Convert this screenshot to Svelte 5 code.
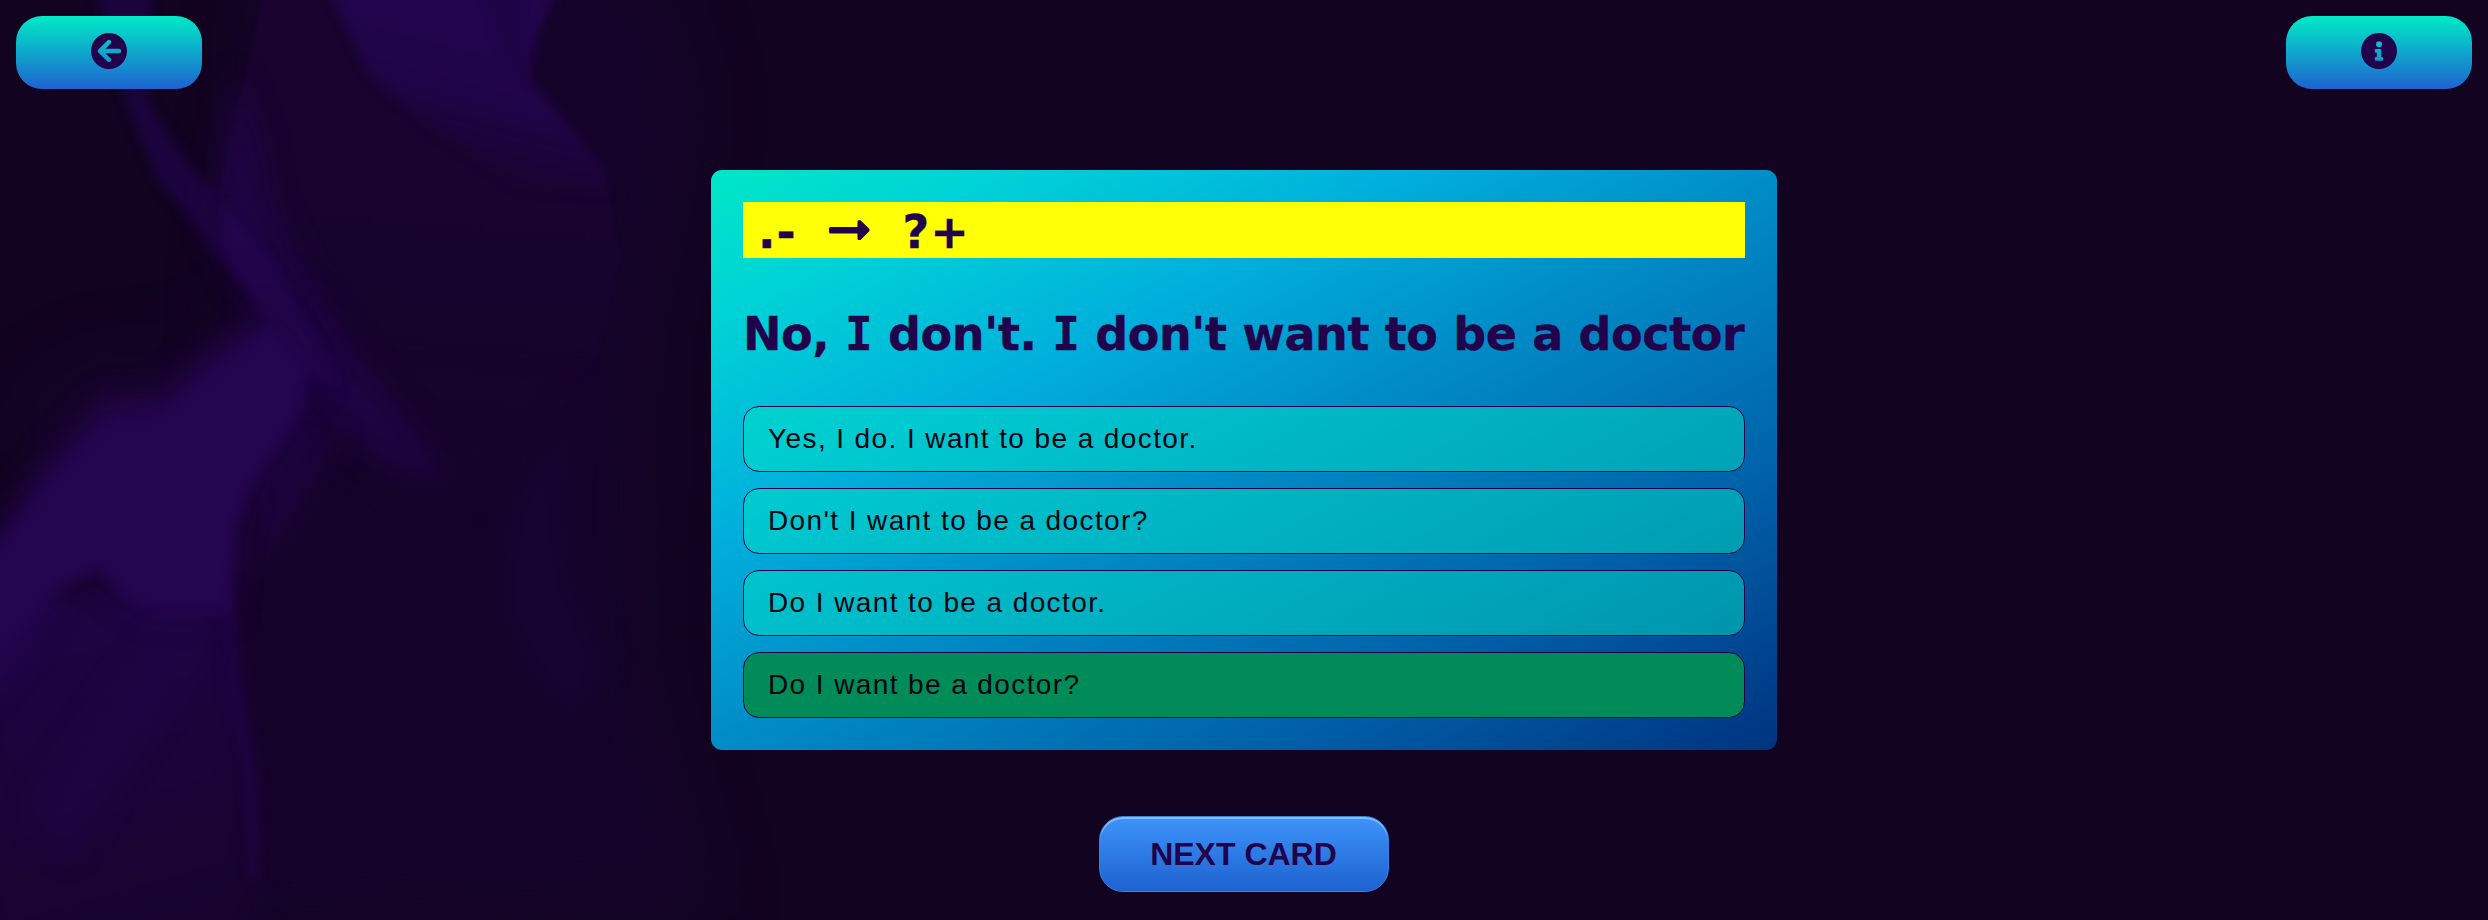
<script>
  const question = ["No,", "I", "don't.", "I", "don't", "want", "to", "be", "a", "doctor"];
  const answers = [
    { text: "Yes, I do. I want to be a doctor.", correct: false },
    { text: "Don't I want to be a doctor?", correct: false },
    { text: "Do I want to be a doctor.", correct: false },
    { text: "Do I want be a doctor?", correct: true }
  ];
</script>

<div class="page">
  <svg class="backdrop" viewBox="0 0 2488 920" aria-hidden="true" color-interpolation-filters="sRGB">
    <defs>
      <filter id="b6" x="-30%" y="-30%" width="160%" height="160%"><feGaussianBlur stdDeviation="10" /></filter>
      <filter id="b3" x="-30%" y="-30%" width="160%" height="160%"><feGaussianBlur stdDeviation="3" /></filter>
      <filter id="b18" x="-80%" y="-80%" width="260%" height="260%"><feGaussianBlur stdDeviation="26" /></filter>
      <filter id="b40" x="-50%" y="-50%" width="200%" height="200%"><feGaussianBlur stdDeviation="60" /></filter>
      <linearGradient id="sheet" gradientUnits="userSpaceOnUse" x1="800" y1="0" x2="740" y2="900">
        <stop offset="0" stop-color="#18042f" /><stop offset=".55" stop-color="#17042e" /><stop offset="1" stop-color="#16042b" stop-opacity="0" />
      </linearGradient>
      <linearGradient id="crest" gradientUnits="userSpaceOnUse" x1="900" y1="60" x2="830" y2="350">
        <stop offset="0" stop-color="#22054c" /><stop offset=".35" stop-color="#200448" /><stop offset="1" stop-color="#180430" stop-opacity="0" />
      </linearGradient>
      <linearGradient id="low" gradientUnits="userSpaceOnUse" x1="200" y1="1050" x2="330" y2="1560">
        <stop offset="0" stop-color="#1e0443" /><stop offset="1" stop-color="#18042f" />
      </linearGradient>
    </defs>
    <g transform="scale(.5293 .5867)">
      <path d="M480-80H1240L1330 180 1240 600 1230 1130 1360 1560 0 1650V1100L420 900Z" fill="#16042b" opacity=".85" filter="url(#b40)" />
      <path d="M500-20H1060L1000 80V135L1145 290 1170 440 1130 600 1000 800 850 950 640 830 500 540 400 380Z" fill="url(#sheet)" filter="url(#b3)" />
      <path d="M610-40H1065Q1005 60 1000 135L1145 290 1150 330 980 320 820 220 700 130Z" fill="url(#crest)" filter="url(#b6)" />
      <path d="M930-20H985Q970 60 1000 135L980 130Q940 80 920-20Z" fill="#1b043e" opacity=".6" filter="url(#b6)" />
      <path d="M180-20H290L270 140Q300 230 410 330L480 500 420 440 300 310 240 180Z" fill="#1b043e" filter="url(#b6)" />
      <path d="M440 130Q500 240 500 330 560 480 700 640L860 830 740 790 600 700 500 550 400 400Z" fill="#1e0444" filter="url(#b18)" />
      <path d="M420 350Q500 420 590 570L640 660 560 630 500 540 430 440Z" fill="#23054c" filter="url(#b6)" />
      <path d="M40 700L180 620 340 620 500 530 580 600 480 640 80 800Z" fill="#170430" opacity=".8" filter="url(#b40)" />
      <path d="M-40 980L100 1000 430 1030 470 1300 490 1500 460 1650-40 1650Z" fill="url(#low)" filter="url(#b18)" />
      <path d="M415 1040H445L460 1200 490 1340 488 1500 470 1500 460 1300 425 1180Z" fill="#1e0444" opacity=".8" filter="url(#b6)" />
      <path d="M500 780L570 700 640 740 560 880 460 1000Z" fill="#1b043c" filter="url(#b18)" />
      <path d="M-60 980L60 820 200 680 300 680 400 600 510 540 575 620 570 700 475 820 442 900 435 1045 300 1045 230 1020 190 965 110 980 70 1070-60 1220Z" fill="#24054f" filter="url(#b18)" />
      <path d="M-20 960L60 860 200 725 300 710 400 640 510 560 575 620 570 700 475 820 442 900 435 1045 300 1045 240 1020 190 970 110 1000 60 1050-20 1120Z" fill="#24054f" filter="url(#b6)" />
      <path d="M1100 650L1060 850 1080 1000 1140 1120 1100 1240 1010 1160 940 1040 960 870Z" fill="#180431" filter="url(#b18)" />
      <path d="M300 1080L400 1080 240 1300 130 1460 50 1380Z" fill="#220549" opacity=".5" filter="url(#b18)" />
    </g>
  </svg>

  <header>
    <button class="tool" aria-label="Back">
      <svg width="36" height="36" viewBox="0 0 36 36">
        <path fill-rule="evenodd" fill="#20034b" d="M18 0a18 18 0 1 0 0 36 18 18 0 0 0 0-36ZM7.3 16.5 16.4 7.6a2.2 2.2 0 0 1 3.2 3.1L14.4 15.8H28a2.2 2.2 0 0 1 0 4.4H14.4l5.2 5.1a2.2 2.2 0 0 1-3.2 3.1L7.3 19.5a2.1 2.1 0 0 1 0-3Z" />
      </svg>
    </button>
    <button class="tool" aria-label="Information">
      <svg width="36" height="36" viewBox="0 0 36 36">
        <path fill-rule="evenodd" fill="#20034b" d="M18 0a18 18 0 1 0 0 36 18 18 0 0 0 0-36ZM18 8.2a3 3 0 1 1 0 6 3 3 0 0 1 0-6ZM14.8 16h4.6a1 1 0 0 1 1 1v7h.8a1 1 0 0 1 1 1v1.8a1 1 0 0 1-1 1h-6.4a1 1 0 0 1-1-1V25a1 1 0 0 1 1-1h1v-4.300h-1a1 1 0 0 1-1-1V17a1 1 0 0 1 1-1Z" />
      </svg>
    </button>
  </header>

  <main>
    <section class="card">
      <div class="hint"><span>.-</span><svg width="41" height="21" viewBox="0 0 41 21"><path fill="#20034b" d="M1.5 7H28.500V1.500Q28.500 0 30 .2H31.500L40 8.500Q41.300 10 40 11.500L31.500 20H30Q28.500 20.200 28.500 18.500V13.500H1.500Q0 13.500 0 12V8.500Q0 7 1.500 7Z" /></svg><span>?+</span></div>
      <h1>{#each question as word, i}{i ? " " : ""}<span class:pronoun={word === "I"}>{word}</span>{/each}</h1>
      <div class="answers">
        {#each answers as answer}
          <button class="answer" class:correct={answer.correct}>{answer.text}</button>
        {/each}
      </div>
    </section>
    <button class="next">NEXT CARD</button>
  </main>
</div>

<style>
  :global(body) { margin: 0; background: #120320; }
  .page { position: relative; width: 100%; height: 920px; overflow: hidden; background: #120320; color: #20034b; }
  .backdrop { position: absolute; inset: 0; width: 2488px; height: 920px; }
  button { font-family: "Liberation Sans", Arial, sans-serif; margin: 0; cursor: pointer; }
  header { position: relative; display: flex; justify-content: space-between; padding: 16px; }
  .tool { width: 186px; height: 73px; padding: 0 0 3px; border: 0; border-radius: 26px; background: linear-gradient(#00ebc7, #1e62d0); display: flex; align-items: center; justify-content: center; }
  main { position: relative; display: flex; flex-direction: column; align-items: center; padding-top: 65px; }
  .card { box-sizing: border-box; width: 1066px; height: 580px; padding: 32px; border-radius: 11px; background: linear-gradient(152deg, #00e7c7, #00d3d6 13%, #00b0dc 32%, #008dc7 50%, #0062aa 75%, #003380); }
  .hint { height: 56px; padding-left: 15px; box-sizing: border-box; background: #ffff05; display: flex; align-items: center; font: bold 46px/56px "DejaVu Sans", Verdana, sans-serif; letter-spacing: 1px; white-space: pre; }
  .hint span { padding-top: 4px; -webkit-text-stroke: .4px #20034b; }
  .hint svg { margin: 1px 33px 0 32px; }
  h1 { box-sizing: border-box; margin: 0; padding-top: 2px; height: 148px; font: bold 46px/148px "DejaVu Sans", Verdana, sans-serif; letter-spacing: -.38px; white-space: nowrap; -webkit-text-stroke: .4px #20034b; }
  .pronoun { font-family: "DejaVu Sans Mono", monospace; line-height: 1; }
  .answers { display: flex; flex-direction: column; gap: 16px; }
  .answer { height: 66px; padding: 0 24px; border: 1px solid #20034b; border-radius: 16px; background: rgba(0, 226, 196, .5); color: #050510; font-size: 28px; letter-spacing: 1.4px; text-align: left; }
  .correct { background: #008b58; }
  .next { margin-top: 66px; width: 290px; height: 76px; padding: 0 7px 0 6px; border: 1px solid #3181ee; border-radius: 24px; background: linear-gradient(#3d94f9, #1e62d0); box-shadow: inset 0 2px 0 rgba(255, 255, 255, .4); color: #20034b; font-size: 32px; font-weight: bold; }
</style>
